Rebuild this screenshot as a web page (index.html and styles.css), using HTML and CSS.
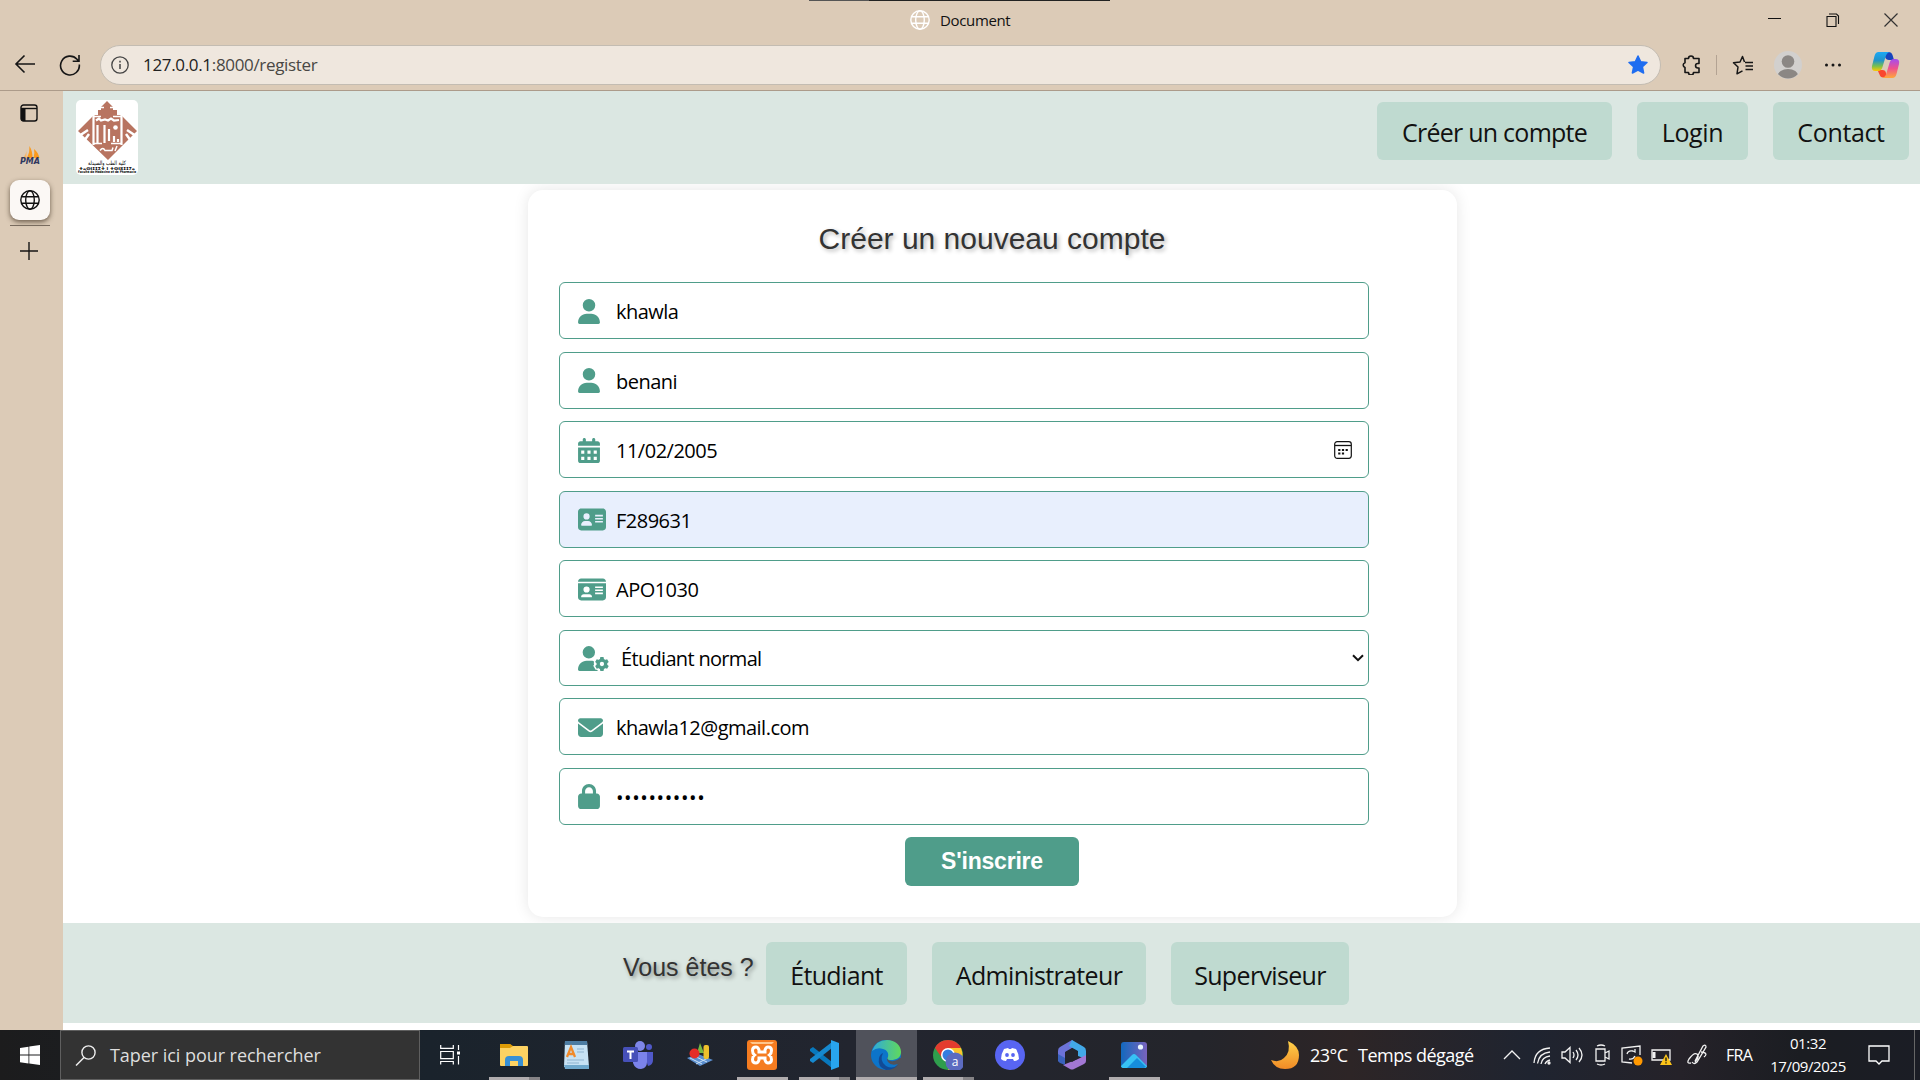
FILE: index.html
```html
<!DOCTYPE html>
<html lang="fr">
<head>
<meta charset="utf-8">
<title>Document</title>
<link rel="stylesheet" href="styles.css">
</head>
<body>
<svg class="defs" width="0" height="0">
  <symbol id="globe" viewBox="0 0 20 20"><g fill="none" stroke="currentColor" stroke-width="1.4"><circle cx="10" cy="10" r="9.2"/><ellipse cx="10" cy="10" rx="4.3" ry="9.2"/><path d="M1.5 6.7h17M1.5 13.3h17"/></g></symbol>
  <symbol id="user" viewBox="0 0 448 512"><path fill="currentColor" d="M224 256A128 128 0 1 0 224 0a128 128 0 1 0 0 256zm-45.700 48C79.800 304 0 383.800 0 482.300C0 498.700 13.300 512 29.700 512H418.300c16.400 0 29.700-13.300 29.700-29.700C448 383.800 368.200 304 269.700 304H178.300z"/></symbol>
</svg>
<header class="titlebar">
  <div class="drag-line"></div>
  <div class="tab-title"><svg class="i20 white"><use href="#globe"/></svg><span class="doc">Document</span></div>
  <div class="window-controls">
    <svg viewBox="0 0 14 14"><path d="M0 5.500h13" stroke="#111" stroke-width="1"/></svg>
    <svg viewBox="0 0 14 14"><path d="M1 3.500h9v10H1zM3 1h7.500l2 2v8" fill="none" stroke="#111" stroke-width="1.100"/></svg>
    <svg viewBox="0 0 14 14"><path d="M.5.5l13 13M13.500.5l-13 13" stroke="#333" stroke-width="1.200"/></svg>
  </div>
</header>
<div class="toolbar">
  <svg class="i22 back" viewBox="0 0 22 22"><path d="M21 11H2M10.500 2.500L2 11l8.500 8.500" fill="none" stroke="#161616" stroke-width="1.600"/></svg>
  <svg class="i22 reload" viewBox="0 0 22 22"><path d="M20.300 10.500A9.400 9.400 0 1 1 18 5.300L19.500 7M20 1v6.300h-6.300" fill="none" stroke="#161616" stroke-width="1.600"/></svg>
  <div class="address">
    <svg class="info" viewBox="0 0 18 18"><circle cx="9" cy="9" r="8.200" fill="none" stroke="#444" stroke-width="1.300"/><path d="M9 8v5M9 4.800v1.600" stroke="#444" stroke-width="1.500"/></svg>
    <span class="url"><span class="host">127.0.0.1</span>:8000/register</span>
    <svg class="star" viewBox="0 0 20 20"><path fill="#1f6df0" stroke="#1f6df0" stroke-width="1.500" stroke-linejoin="round" d="M10 1l2.700 5.700 6.300.8-4.600 4.300 1.200 6.200L10 15l-5.600 3 1.200-6.200L1 7.500l6.300-.8z"/></svg>
  </div>
  <svg class="puzzle" viewBox="0 0 20 20"><path fill="none" stroke="#161616" stroke-width="1.600" stroke-linejoin="round" d="M4 3.500h3.500a2.500 2.500 0 0 1 5 0h5.500v5h-1.200a2 2 0 0 0 0 4.500H18v4.500h-5.500a2.500 2.500 0 0 1-5 0H4V12.500a2.500 2.500 0 0 1 0-4.800z"/></svg>
  <div class="tool-sep"></div>
  <svg class="favs" viewBox="0 0 22 20"><path fill="none" stroke="#161616" stroke-width="1.500" stroke-linejoin="round" d="M12.500 7l-2-5.500L8 7 1.500 7.800 6 12l-1 6.800 5.500-3M13 7.500h8M13.500 11H21M13.500 14.500H21"/></svg>
  <svg class="avatar" viewBox="0 0 28 28"><clipPath id="ac"><circle cx="14" cy="14" r="13.500"/></clipPath><circle cx="14" cy="14" r="14" fill="#d2d0ce"/><g clip-path="url(#ac)" fill="#8b8784"><circle cx="14" cy="10.500" r="6.300"/><ellipse cx="14" cy="25" rx="10.300" ry="7"/></g></svg>
  <svg class="dots" viewBox="0 0 18 6"><g fill="#161616"><circle cx="2.500" cy="3" r="1.500"/><circle cx="9" cy="3" r="1.500"/><circle cx="15.500" cy="3" r="1.500"/></g></svg>
  <svg class="copilot" viewBox="0 0 28 28">
    <defs><linearGradient id="cl" x1="0" y1="0" x2="0" y2="1"><stop offset="0" stop-color="#1ba8f5"/><stop offset=".45" stop-color="#2294c8"/><stop offset=".75" stop-color="#7cc04b"/><stop offset="1" stop-color="#ffc800"/></linearGradient><linearGradient id="cr" x1="0" y1="0" x2="0" y2="1"><stop offset="0" stop-color="#a44df0"/><stop offset=".5" stop-color="#f0528c"/><stop offset="1" stop-color="#ffa83b"/></linearGradient></defs>
    <path d="M13 1h4q3 0 4 3l1.500 5h-5q-3 0-4-3z" fill="#1744bd"/><path d="M6 19h5q3 0 3.500 3l1 4.500h-3Q9 27 8 23.500z" fill="#f9472f"/>
    <path d="M7 1h11q-3 1-4 5l-3 10q-1 4-4.500 4H4q-4.500 0-3.500-5L3 5q1-4 4-4z" fill="url(#cl)"/>
    <path d="M21 27H11q3-1 4-5l3-10q1-4 4.500-4H24q4.500 0 3.500 5L25 23q-1 4-4 4z" fill="url(#cr)"/>
  </svg>
</div>
<div class="main">
  <aside class="side">
    <svg class="tabs-ico" viewBox="0 0 18 18"><rect x="1" y="1" width="16" height="16" rx="2.500" fill="none" stroke="#111" stroke-width="1.400"/><path d="M1 4.500h16" stroke="#111" stroke-width="1.400"/><path d="M1 4h4.500v13H3Q1 17 1 15z" fill="#111"/></svg>
    <div class="pma"><svg viewBox="0 0 20 13"><path d="M1 13q4-2 5.500-8v7z" fill="#f4b46a"/><path d="M7 12Q10 6 9.500 0q3 5 3 12zM13.500 12q1.500-5 .5-9 4 3 5.500 9z" fill="#fa9a1e"/></svg><span>PMA</span></div>
    <div class="tab-active"><svg class="i20"><use href="#globe"/></svg></div>
    <div class="side-line"></div>
    <svg class="plus" viewBox="0 0 18 18"><path d="M0 9h18M9 0v18" stroke="#161616" stroke-width="1.400"/></svg>
  </aside>
  <div class="page">
    <nav class="site-nav">
      <svg class="logo" viewBox="0 0 62 75"><rect width="62" height="75" rx="5" fill="#fff"/>
        <path fill="#b87460" d="M31 1l6 6v3h4v5h4l2 2 14 14-29 29L2 31l14-14 2-2h4v-5h3V7z"/>
        <g fill="none" stroke="#fff"><path d="M25 7.500h3M34 7.500h4M18 16.500h7M37 16.500h9" stroke-width="1.500"/><path d="M17.500 15v30M45.500 15v30" stroke-width="2.200"/><path d="M20 20.500l3-2 2 2 4-1 3 1 3-2 3 2 5-.5" stroke-width="2.200"/><path d="M3 36l9-6M8 41l5-7M60 36l-9-6M55 41l-5-7" stroke-width="2.500"/><path d="M21.500 43V25M28.500 43V25M33 41V29M38 42v-6M42 42v-3" stroke-width="2.200"/><path d="M18 43.500h8M35 43.500h11M24 50.500q3-4 5 0h7l1-3M39 51l2-5" stroke-width="1.500"/></g><circle cx="39.500" cy="27.500" r="2.300" fill="#fff"/>
        <text x="31" y="64.500" text-anchor="middle" font-size="6" textLength="38" lengthAdjust="spacingAndGlyphs">كلية الطب والصيدلة</text>
        <text x="31" y="69.500" text-anchor="middle" font-size="4" font-weight="700" textLength="56" lengthAdjust="spacingAndGlyphs">ⵜⴰⵙⵏⵊⵊⵉⵜ ⵏ ⵜⵙⵏⵓⵊⵊⵢⴰ</text>
        <text x="31" y="73.200" text-anchor="middle" font-size="3.600" font-weight="700" textLength="58" lengthAdjust="spacingAndGlyphs">Faculté de Médecine et de Pharmacie</text>
      </svg>
      <div class="nav-links"><a class="nav-btn w1">Créer un compte</a><a class="nav-btn w2">Login</a><a class="nav-btn w3">Contact</a></div>
    </nav>
    <section class="form-area">
      <form class="card">
        <h2>Créer un nouveau compte</h2>
        <div class="fields">
          <div class="field"><svg class="ico w21"><use href="#user"/></svg><span class="val">khawla</span></div>
          <div class="field"><svg class="ico w21"><use href="#user"/></svg><span class="val">benani</span></div>
          <div class="field"><svg class="ico w21" viewBox="0 0 448 512"><path fill="currentColor" fill-rule="evenodd" d="M128 0c18 0 32 14 32 32v32h128V32c0-18 14-32 32-32s32 14 32 32v32h48c26 0 48 22 48 48v48H0v-48c0-26 22-48 48-48h48V32c0-18 14-32 32-32zM0 192h448v272c0 26-22 48-48 48H48c-26 0-48-22-48-48zm64 64v64h64v-64zm128 0v64h64v-64zm128 0v64h64v-64zM64 384v64h64v-64zm128 0v64h64v-64zm128 0v64h64v-64z"/></svg><span class="val date-val">11/02/2005</span>
            <svg class="picker" viewBox="0 0 18 18"><rect x=".7" y=".7" width="16.600" height="16.600" rx="2.500" fill="none" stroke="#111" stroke-width="1.200"/><path d="M1 4.500h16" stroke="#111" stroke-width="1.300"/><path d="M4.200 9h2.200M7.900 9h2.200M11.600 9h2.200M4.200 12.500h2.200M7.900 12.500h2.200" stroke="#111" stroke-width="2.200"/></svg></div>
          <div class="field autofill"><svg class="ico w28" viewBox="0 0 576 512"><path fill="currentColor" fill-rule="evenodd" d="M64 32h448c35 0 64 29 64 64v320c0 35-29 64-64 64H64c-35 0-64-29-64-64V96c0-35 29-64 64-64zm112 224a64 64 0 1 0 0-128 64 64 0 1 0 0 128zm-32 32c-44 0-80 36-80 80 0 9 7 16 16 16h192c9 0 16-7 16-16 0-44-36-80-80-80zM352 160v32h160v-32zm0 64v32h160v-32zm0 64v32h160v-32z"/></svg><span class="val">F289631</span></div>
          <div class="field"><svg class="ico w28" viewBox="0 0 576 512"><path fill="currentColor" fill-rule="evenodd" d="M0 96c0-35 29-64 64-64h448c35 0 64 29 64 64H0zm0 32h576v288c0 35-29 64-64 64H64c-35 0-64-29-64-64zm64 277c0 6 5 11 11 11h202c6 0 11-5 11-11 0-29-24-53-53-53H117c-29 0-53 24-53 53zm112-85a64 64 0 1 0 0-128 64 64 0 1 0 0 128zM352 192v32h160v-32zm0 64v32h160v-32zm0 64v32h160v-32z"/></svg><span class="val">APO1030</span></div>
          <div class="field select"><svg class="ico w31" viewBox="0 0 640 512"><path fill="currentColor" d="M224 256a128 128 0 1 0 0-256 128 128 0 0 0 0 256zm-46 48C80 304 0 384 0 482c0 17 13 30 30 30h389c-12-7-21-14-30-26l-26 3-48-84 16-21 c-5-25-5-38 0-63l-8-9c-16-5-34-8-53-8z"/><g transform="translate(494 370)"><circle r="78" fill="none" stroke="currentColor" stroke-width="67"/><path id="g" d="M-33-143h66l10 50h-86zM-33 143h66l10-50h-86z" fill="currentColor"/><use href="#g" transform="rotate(60)"/><use href="#g" transform="rotate(120)"/></g></svg><span class="val">Étudiant normal</span>
            <svg class="chev" viewBox="0 0 12 8"><path d="M1 1.200l5 5 5-5" fill="none" stroke="#111" stroke-width="2"/></svg></div>
          <div class="field"><svg class="ico w25" viewBox="0 0 512 512"><path fill="currentColor" d="M48 64C21.500 64 0 85.500 0 112c0 15.100 7.100 29.300 19.200 38.400L236.800 313.600c11.400 8.500 27 8.500 38.400 0L492.800 150.400c12.100-9.100 19.200-23.300 19.200-38.400c0-26.500-21.500-48-48-48H48zM0 176V384c0 35.300 28.700 64 64 64H448c35.300 0 64-28.700 64-64V176L294.400 339.200c-22.800 17.100-54 17.100-76.800 0L0 176z"/></svg><span class="val">khawla12@gmail.com</span></div>
          <div class="field"><svg class="ico w21" viewBox="0 0 448 512"><path fill="currentColor" d="M144 144v48H304V144c0-44.200-35.800-80-80-80s-80 35.800-80 80zM80 192V144C80 64.500 144.500 0 224 0s144 64.500 144 144v48h16c35.300 0 64 28.700 64 64V448c0 35.300-28.700 64-64 64H64c-35.300 0-64-28.700-64-64V256c0-35.300 28.700-64 64-64H80z"/></svg><span class="val password">•••••••••••</span></div>
        </div>
        <div class="submit">S'inscrire</div>
      </form>
    </section>
    <footer class="site-footer"><span class="who">Vous êtes ?</span><a class="nav-btn f1">Étudiant</a><a class="nav-btn f2">Administrateur</a><a class="nav-btn f3">Superviseur</a></footer>
  </div>
</div>
<div class="taskbar">
  <div class="start"><svg viewBox="0 0 20 20"><path fill="#fff" d="M0 3l8.500-1.200v7.700H0zM9.300 1.600L20 0v9.500H9.300zM0 10.400h8.500v8L0 17.200zM9.300 10.400H20V20L9.300 18.500z"/></svg></div>
  <div class="search"><svg viewBox="0 0 21 21"><circle cx="13.500" cy="7.500" r="6.600" fill="none" stroke="#eee" stroke-width="1.400"/><path d="M9 12.500L1 20.500" stroke="#eee" stroke-width="1.500"/></svg><span class="ph">Taper ici pour rechercher</span></div>
  <div class="taskview"><svg viewBox="0 0 20 20"><path d="M.7 0v3.300h12.600V0M.7 6.500h12.600v7.200H.7zM.7 19.500v-3h12.600v3M18.500 0v5M18.500 11v8.500" fill="none" stroke="#fff" stroke-width="1.200"/><path d="M17 6.500h3v3h-3z" fill="#fff"/></svg></div>
  <div class="apps">
    <div class="app open stack"><svg viewBox="0 0 30 30"><path d="M1 4h10l3 3h14v7H1z" fill="#dd9b05"/><rect x="1" y="6" width="28" height="20" rx="1" fill="#fdd262"/><path d="M1 4h10l3 2-3 2H1z" fill="#dd9b05"/><path d="M6 26v-6q0-4 4-4h10q4 0 4 4v6h-5v-5h-8v5z" fill="#3990d4"/></svg></div>
    <div class="app"><svg viewBox="0 0 30 30"><path d="M4 1h22l2 26H3z" fill="#c7e2f4"/><path d="M4 1h22l.3 4H3.700z" fill="#4c7ca2"/><path d="M3 25h25v4H4z" fill="#70a9cd"/><path d="M6 17l4-10 4 10M7.500 14h5" fill="none" stroke="#f18a2a" stroke-width="2.300"/><path d="M16 9h7M16 12h7M6 20h17M6 23h12" stroke="#8fb4cf" stroke-width="1.200"/></svg></div>
    <div class="app"><svg viewBox="0 0 30 30"><circle cx="17" cy="6" r="5" fill="#7e86e8"/><circle cx="26" cy="7" r="3" fill="#5059c9"/><path d="M20 12h10v8q0 5-5 6z" fill="#5059c9"/><path d="M10 12h14v10q0 6-6 7-6 0-8-6z" fill="#7b83eb"/><rect y="7" width="15" height="15" rx="1.500" fill="#4650b8"/><path d="M4 11.500h7M7.500 11.500v7.500" stroke="#fff" stroke-width="2"/></svg></div>
    <div class="app"><svg viewBox="0 0 30 30"><path d="M2 18l11-4 15 6-13 6z" fill="#5b8fcf"/><path d="M5 18l12 6M9 16l13 6M23 18l-12 6" stroke="#cae0f5" stroke-width="1"/><path d="M12 13l3-10 4 10z" fill="#79b841"/><circle cx="9.500" cy="13.500" r="5" fill="#e52d28"/><rect x="18.500" y="5" width="5.500" height="14" rx="2" fill="#efc02c"/></svg></div>
    <div class="app open"><svg viewBox="0 0 30 30"><rect width="30" height="30" rx="3" fill="#f57c20"/><path d="M3 2h24l-2 2H5z" fill="#ffc68b"/><path d="M9 7q-3.500 0-3.500 3.500 0 3 2 4.500-2 1.500-2 4.500Q5.500 23 9 23q2 0 3-3v-2h6v2q1 3 3 3 3.500 0 3.500-3.500 0-3-2-4.500 2-1.500 2-4.500Q24.500 7 21 7q-2 0-3 3v2h-6v-2q-1-3-3-3z" fill="none" stroke="#fff" stroke-width="3"/></svg></div>
    <div class="app open stack"><svg viewBox="0 0 30 30"><path d="M1 9l3-2 19 15v6L1 11z" fill="#0878bd"/><path d="M1 21l3 2L23 8V2L1 19z" fill="#1689cf"/><path d="M22 0l8 3v24l-8 3z" fill="#28a4ee"/></svg></div>
    <div class="app open active"><svg viewBox="0 0 30 30"><defs><linearGradient id="eg"><stop stop-color="#2fa9dc"/><stop offset="1" stop-color="#61d95b"/></linearGradient></defs><circle cx="15" cy="15" r="15" fill="#0c74ca"/><path d="M1 11Q5 0 16 0c8 0 14 5 14 12 0 6-5 8-10 8-3 0-5-1-3-3 1-4-1-7-5-8Q6 7 1 11z" fill="url(#eg)"/><path d="M12 13q-4 8 3 13 7 4 13-2-5 6-13 6Q6 27 8 18q1-4 4-5z" fill="#114a96"/><path d="M17 17q-2 3 3 4 5 1 9-3h1v5l-3 1q-7 2-10-2-2-3 0-5z" fill="#50525b"/></svg></div>
    <div class="app open stack"><svg viewBox="0 0 30 30"><circle cx="15" cy="15" r="15" fill="#2f9e4d"/><path d="M2 8Q6 0 15 0q9 0 13 8H15l-6 10z" fill="#e33b2e"/><path d="M15 8h13q4 10-3 18-4 4-10 4l6-11z" fill="#fbc42b"/><circle cx="15" cy="15" r="7" fill="#fff"/><circle cx="15" cy="15" r="5.500" fill="#347de0"/><circle cx="22" cy="22" r="9.500" fill="#5c6bc0"/><text x="22" y="26" text-anchor="middle" font-size="12" fill="#fff">a</text></svg></div>
    <div class="app"><svg viewBox="0 0 30 30"><circle cx="15" cy="15" r="15" fill="#5865f2"/><path d="M9 9l4-1 1 1h2l1-1 4 1q3 5 3 10-2 2-5 2l-1-2h-6l-1 2q-3 0-5-2 0-5 3-10z" fill="#fff"/><circle cx="12" cy="15" r="1.900" fill="#5865f2"/><circle cx="18" cy="15" r="1.900" fill="#5865f2"/></svg></div>
    <div class="app"><svg viewBox="0 0 30 30"><path d="M15 0L3 7q-2 1-2 4v10l7 3V12l12-7z" fill="#6c73d9"/><path d="M15 0l12 7q2 1 2 4v8l-8-3v-5l-9-5z" fill="#42a9e8"/><path d="M29 15v6q0 2-2 3l-10 5q-2 1-4 0l-7-4 15-6z" fill="#a277d4"/><path d="M1 14l7 4v7l-5-2q-2-1-2-3z" fill="#3a62bd"/><path d="M15 8.500l6 3.500v6.500L15 22l-6-3.500V12z" fill="#23252d"/></svg></div>
    <div class="app open"><svg viewBox="0 0 30 30"><defs><linearGradient id="ph" x2="1"><stop stop-color="#1269be"/><stop offset="1" stop-color="#7963bd"/></linearGradient></defs><rect x="2" y="2" width="26" height="26" rx="3" fill="url(#ph)"/><path d="M2 26l11-11q2-2 4 0l11 11q0 2-3 2H5q-3 0-3-2z" fill="#37c2f5"/><path d="M8 28l10-10 9 9-2 1z" fill="#168ddc"/><circle cx="21.500" cy="7" r="2.600" fill="#e8f4fd"/></svg></div>
  </div>
  <div class="weather"><svg viewBox="0 0 28 28"><defs><linearGradient id="mg" x2="0" y2="1"><stop stop-color="#ffd24a"/><stop offset="1" stop-color="#f08a26"/></linearGradient></defs><path d="M17 0q11 5 11 14 0 14-14 14Q4 28 0 19q8 3 13-2 7-6 4-17z" fill="url(#mg)"/></svg><span class="temp">23°C</span><span class="sky">Temps dégagé</span></div>
  <div class="tray">
    <svg viewBox="0 0 22 22"><path d="M3 15l8-8 8 8"/></svg>
    <svg viewBox="0 0 22 22"><path d="M3 19Q4 5 19 4M6.500 19.500Q8 9 19 8M10 20q1-7 9-8M14 20q1-3 5-4"/><circle cx="18" cy="19" r="1" fill="#fff"/></svg>
    <svg viewBox="0 0 22 22"><path d="M1 8h3l5-4.500v15L4 14H1zM12 8q2 3 0 6M15 6q4 5 0 10M18 4q6 7 0 14"/></svg>
    <svg viewBox="0 0 22 22"><path d="M5 5h9v12H5zM14 9l4-2v8l-4-2M6 2q4-2 8 0M6 20q4 2 8 0"/></svg>
    <svg viewBox="0 0 22 22"><path d="M19 11V2L1 4v14l10 1M6 10q1-4 6-3l2 1V5M14 12q-2 4-6 3"/><circle cx="17" cy="17" r="4.500" class="orange"/></svg>
    <svg viewBox="0 0 22 22"><path d="M1 6h18v10H1z"/><path d="M3 8v6" stroke-width="3"/><path d="M15 10l6 11H9z" class="yellow"/><path d="M15 13.500v3.800M15 18.300v1.300" class="dark"/></svg>
    <svg class="pen" viewBox="0 0 22 22"><path d="M8 17L16 2q3-2 3 1l-9 15q-3 3-5 0M4 19Q-1 20 2 15q5-7 8-5 3 3-2 8M14 8q8 1 3 5"/></svg>
  </div>
  <span class="lang">FRA</span>
  <div class="clock"><span class="time">01:32</span><span class="date">17/09/2025</span></div>
  <svg class="notif" viewBox="0 0 22 22"><path d="M1 2h20v15h-7l-3 3-3-3H1z" fill="none" stroke="#fff" stroke-width="1.300"/></svg>
  <div class="peek"></div>
</div>
</body>
</html>
```
FILE: styles.css
```css
* { box-sizing: border-box; }
body { margin: 0; width: 1920px; height: 1080px; overflow: hidden; background: #dccbb7; font-family: "Open Sans", "Noto Sans", sans-serif; color: #111; display: flex; flex-direction: column; }
svg { display: block; flex: none; }
span, a { white-space: nowrap; }
.defs { position: absolute; }
.i20 { width: 20px; height: 20px; }
.i22 { width: 22px; height: 22px; }
.white { color: #fff; }

.titlebar { height: 45px; flex: none; display: grid; grid-template-columns: 809px 301px 1fr; grid-template-rows: 1px 38px; }
.drag-line { grid-column: 2; background: linear-gradient(90deg, #555 60px, #222 60px); }
.tab-title { grid-row: 2; grid-column: 2; display: flex; align-items: center; gap: 10px; padding-left: 101px; }
.doc { font-size: 15px; letter-spacing: -.35px; }
.window-controls { grid-row: 2; grid-column: 3; display: flex; justify-content: flex-end; align-items: center; gap: 44px; padding-right: 22px; }
.window-controls svg { width: 14px; height: 14px; }

.toolbar { height: 46px; flex: none; border-bottom: 1px solid #ac9b8a; display: flex; align-items: flex-start; }
.back { margin: 8px 0 0 14px; }
.reload { margin: 9px 0 0 23px; }
.address { width: 1561px; height: 40px; margin: 0 0 0 19px; border: 1px solid #c3bcb2; border-radius: 20px; background: #efe7de; display: flex; align-items: center; }
.info { width: 18px; height: 18px; margin: 0 0 0 10px; }
.url { flex: 1; margin-left: 14px; padding-bottom: 2px; font-size: 17px; color: #494744; letter-spacing: -.33px; }
.host { color: #222; }
.star { width: 20px; height: 20px; margin-right: 12px; }
.puzzle { width: 20px; height: 20px; margin: 10px 0 0 20px; }
.tool-sep { width: 1px; height: 20px; margin: 10px 0 0 15px; background: #b3a393; }
.favs { width: 22px; height: 20px; margin: 10px 0 0 15px; }
.avatar { width: 28px; height: 28px; margin: 6px 0 0 20px; }
.dots { width: 18px; height: 6px; margin: 17px 0 0 22px; }
.copilot { width: 29px; height: 28px; margin: 6px 0 0 29px; }

.main { height: 939px; flex: none; display: flex; }
.side { width: 63px; flex: none; display: flex; flex-direction: column; }
.tabs-ico { width: 18px; height: 18px; margin: 13px 0 0 20px; }
.pma { width: 24px; height: 21px; margin: 24px 0 0 18px; display: flex; flex-direction: column; align-items: center; }
.pma svg { width: 20px; height: 13px; }
.pma span { font: italic 700 8px/6px "DejaVu Sans", sans-serif; color: #30385f; }
.tab-active { width: 40px; height: 40px; margin: 13px 0 0 10px; border-radius: 9px; background: #fbf8f5; box-shadow: 0 2px 5px rgba(60,45,30,.7); display: grid; place-items: center; }
.side-line { width: 40px; height: 1px; margin: 5px 0 0 10px; background: #786b5e; }
.plus { width: 18px; height: 18px; margin: 16px 0 0 20px; }

.page { flex: 1; background: #fff; display: flex; flex-direction: column; }
.site-nav { height: 93px; flex: none; background: #dbe7e2; display: flex; justify-content: space-between; padding: 9px 11px 0 13px; }
.logo { width: 62px; height: 75px; font-family: "DejaVu Sans", sans-serif; overflow: visible; }
.nav-links { display: flex; gap: 25px; padding-top: 2px; }
.nav-btn { height: 58px; border-radius: 6px; background: #bfdad0; display: flex; justify-content: center; font-size: 25px; line-height: 61px; letter-spacing: -.75px; color: #111; }
.w1 { width: 235px; } .w2 { width: 111px; } .w3 { width: 136px; }
.w2, .w3 { letter-spacing: -.35px; }
.form-area { height: 739px; flex: none; padding-top: 6px; overflow: hidden; }
.card { width: 929px; height: 727px; margin-left: 465px; padding: 29px 32px 0 31px; border-radius: 15px; background: #fff; box-shadow: 0 0 15px rgba(0,0,0,.1); display: flex; flex-direction: column; align-items: center; }
h2 { margin: 0 0 24px; height: 39px; font: 400 30px/39px "Liberation Sans", Arial, sans-serif; color: #333; text-shadow: 2px 2px 4px rgba(0,0,0,.3); }
.fields { width: 866px; height: 543px; display: flex; flex-direction: column; justify-content: space-between; }
.field { width: 810px; height: 57px; border: 1px solid #4f9d8a; border-radius: 6px; display: grid; grid-template-columns: 39px 1fr auto; align-items: center; padding: 0 16px 0 17px; font-size: 20px; color: #000; letter-spacing: -.52px; }
.val { padding-top: 2px; }
.date-val { letter-spacing: -.5px; }
.password { letter-spacing: .6px; }
.autofill { background: #e8effd; }
.field.select { height: 56px; grid-template-columns: 44px 1fr auto; padding-right: 4px; letter-spacing: -.68px; }
.ico { height: 25px; color: #4f9d8a; margin: 1px 0 0 1px; }
.w21 { width: 22px; } .w28 { width: 28px; } .w31 { width: 31px; } .w25 { width: 25px; }
.picker { width: 18px; height: 18px; }
.chev { width: 12px; height: 8px; }
.submit { width: 174px; height: 49px; flex: none; margin-top: 12px; border-radius: 6px; background: #4f9d8a; color: #fff; font: 700 23px/49px "Liberation Sans", Arial, sans-serif; letter-spacing: -.2px; text-align: center; }
.site-footer { height: 100px; flex: none; background: #dbe7e2; display: flex; align-items: center; padding-left: 560px; }
.site-footer .nav-btn { height: 63px; line-height: 66px; margin-right: 25px; letter-spacing: -.65px; }
.who { width: 143px; font: 25px/30px "Liberation Sans", Arial, sans-serif; color: #333; text-shadow: 2px 2px 4px rgba(0,0,0,.4); padding-bottom: 12px; }
.f1 { width: 141px; } .f2 { width: 214px; } .f3 { width: 178px; }

.taskbar { height: 50px; flex: none; display: flex; align-items: stretch; color: #fff; background: linear-gradient(90deg, #1c1c1d, #1a232c 430px, #22252f 850px, #24252b 1200px, #2d2526 1350px, #1f2430 1530px, #252229 1680px, #1b1d22 1800px, #1b1d25); }
.start { width: 60px; display: grid; place-items: center; }
.start svg { width: 20px; height: 20px; }
.search { width: 360px; border: 1px solid #5f5f5f; background: #333; display: flex; align-items: center; gap: 14px; padding-left: 14px; }
.search svg { width: 21px; height: 21px; }
.ph { font-size: 18px; color: #dedede; letter-spacing: -.05px; }
.taskview { width: 63px; padding: 15px 0 0 20px; }
.taskview svg { width: 20px; height: 20px; }
.apps { display: flex; width: 788px; }
.app { width: 62px; padding: 10px 0 0 16px; }
.app svg { width: 30px; height: 30px; }
.open { background: linear-gradient(#b0acae, #b0acae) 6px 47px / 51px 3px no-repeat; }
.stack { background: linear-gradient(90deg, #b0acae 40px, #858386 40px) 6px 47px / 51px 3px no-repeat; }
.active { background: linear-gradient(#b0acae, #b0acae) 1px 47px / 61px 3px no-repeat, linear-gradient(#50525b, #50525b) 1px 0 / 61px 50px no-repeat; }
.weather { width: 226px; display: flex; align-items: center; font-size: 18px; letter-spacing: -.5px; }
.weather svg { width: 28px; height: 28px; margin-right: 11px; }
.temp { width: 48px; }
.tray { display: flex; align-items: center; width: 229px; gap: 8px; padding-left: 4px; }
.tray svg { width: 22px; height: 22px; fill: none; stroke: #f2f2f2; stroke-width: 1.300; }
.tray .pen { margin-left: 6px; }
.orange { fill: #ff9800; stroke: none; }
.yellow { fill: #fcc419; stroke: none; }
.dark { stroke: #111; }
.lang { width: 44px; font-size: 16px; line-height: 51px; letter-spacing: -.7px; }
.clock { width: 76px; display: flex; flex-direction: column; align-items: center; font-size: 15px; line-height: 23px; padding-top: 2px; letter-spacing: -.4px; }
.notif { width: 22px; height: 22px; margin: 14px 0 0 22px; }
.peek { width: 1px; margin-left: 24px; background: #666; }
```
